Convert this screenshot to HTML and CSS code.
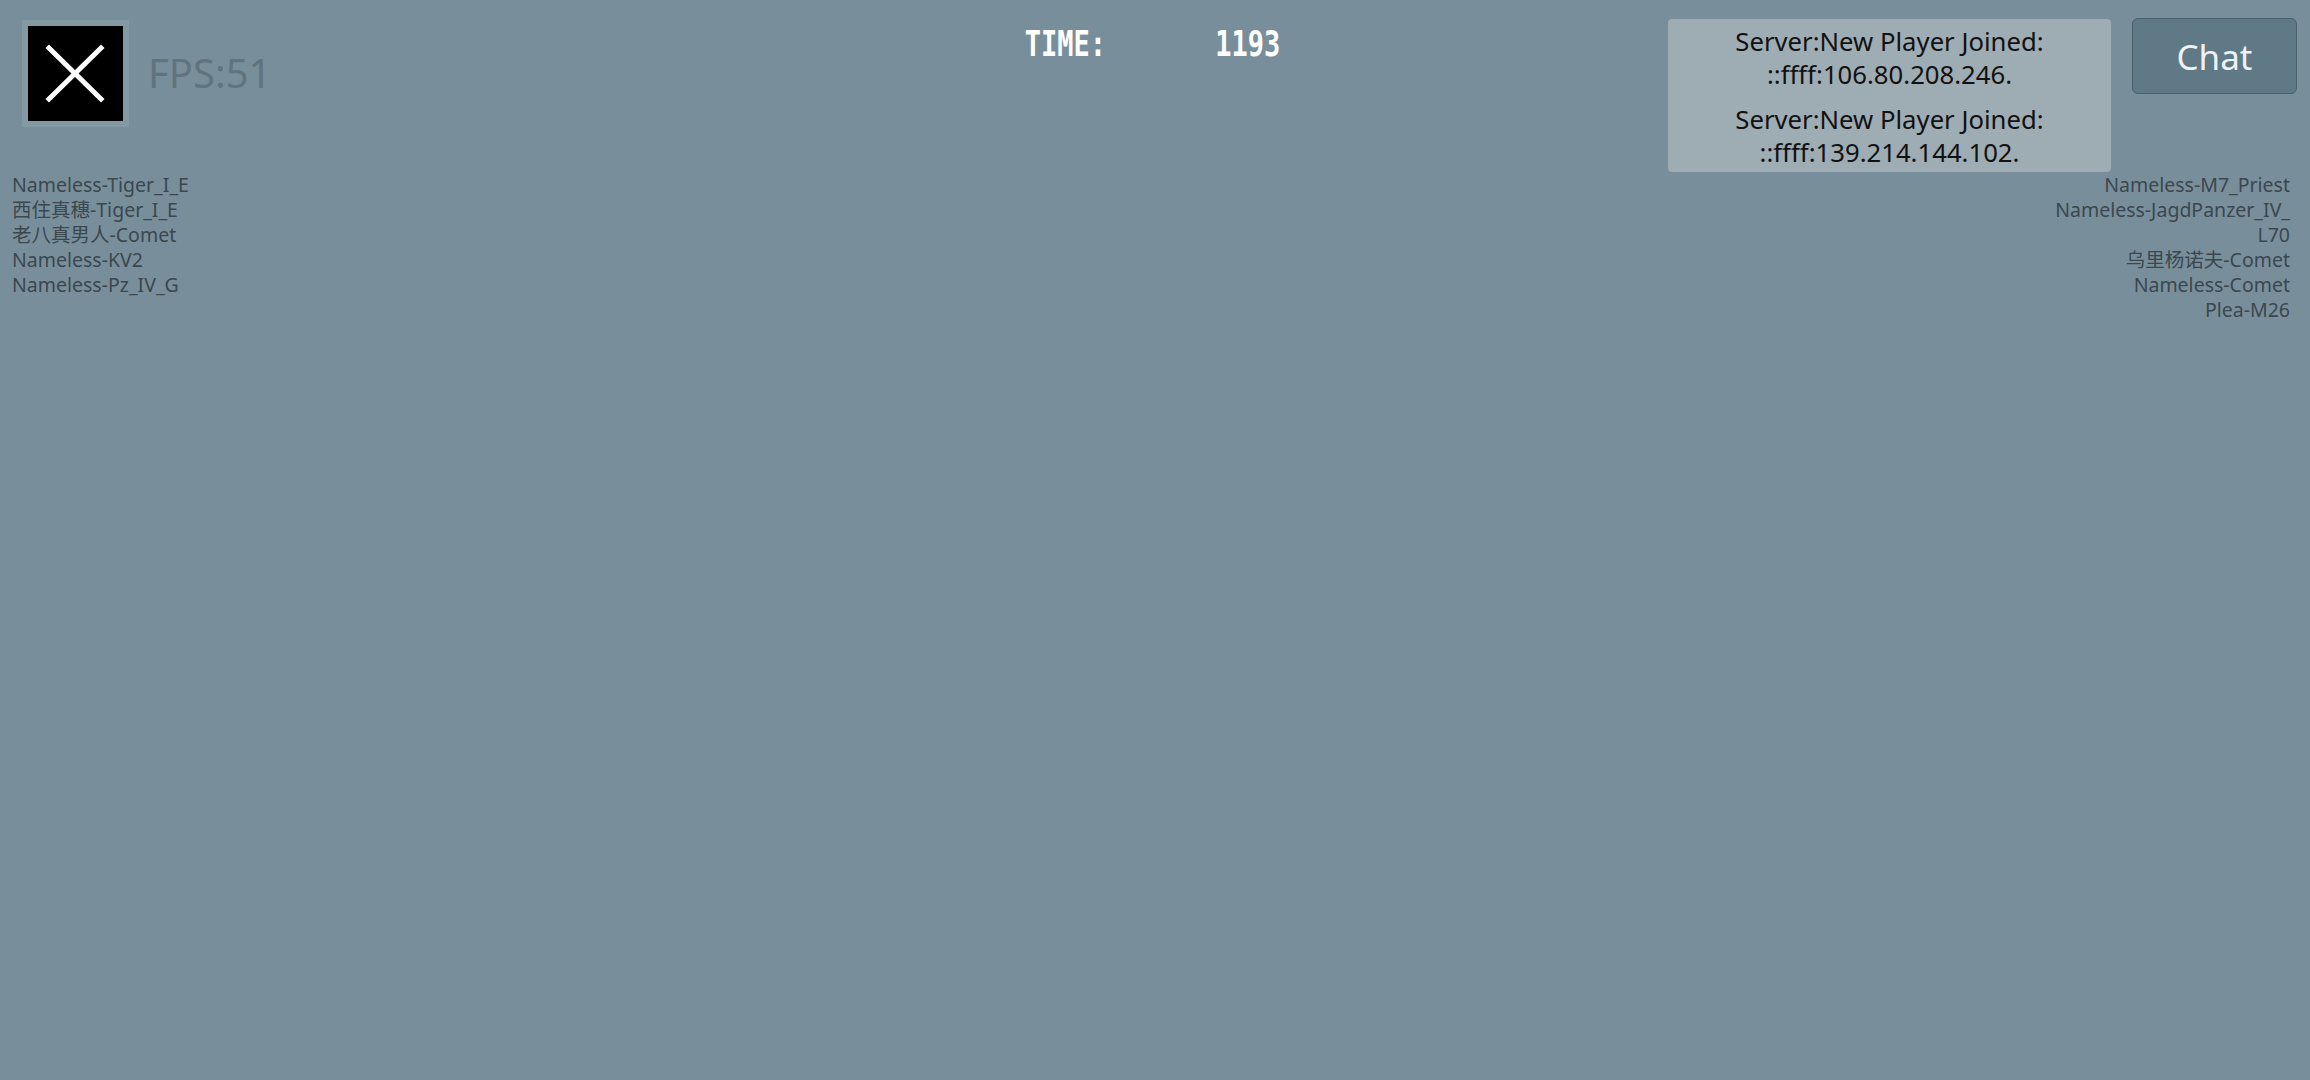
FILE: index.html
```html
<!DOCTYPE html>
<html lang="zh">
<head>
<meta charset="utf-8">
<title>HUD</title>
<link rel="stylesheet" href="styles.css">
</head>
<body>
<div class="hud">
  <header class="top">
    <div class="top-left">
      <button class="close-btn" aria-label="Close">
        <svg viewBox="0 0 95 95" width="95" height="95">
          <path d="M21 22 L73 73 M73 22 L21 73" stroke="#fff" stroke-width="5" stroke-linecap="square"/>
        </svg>
      </button>
      <span class="fps">FPS:51</span>
    </div>
    <div class="timer">
      <span class="timer-label">TIME:</span>
      <span class="timer-value">1193</span>
    </div>
    <div class="top-right">
      <div class="messages">
        <p class="msg">Server:New Player Joined:<br>::ffff:106.80.208.246.</p>
        <p class="msg">Server:New Player Joined:<br>::ffff:139.214.144.102.</p>
      </div>
      <button class="chat-btn">Chat</button>
    </div>
  </header>
  <div class="rosters">
    <ul class="team team-left">
      <li>Nameless-Tiger_I_E</li>
      <li>西住真穗-Tiger_I_E</li>
      <li>老八真男人-Comet</li>
      <li>Nameless-KV2</li>
      <li>Nameless-Pz_IV_G</li>
    </ul>
    <ul class="team team-right">
      <li>Nameless-M7_Priest</li>
      <li>Nameless-JagdPanzer_IV_<wbr>L70</li>
      <li>乌里杨诺夫-Comet</li>
      <li>Nameless-Comet</li>
      <li>Plea-M26</li>
    </ul>
  </div>
</div>
</body>
</html>
```

FILE: styles.css
```css
html, body {
  margin: 0;
  padding: 0;
  height: 100%;
}

body {
  background: #788f9b;
  font-family: "Noto Sans", "Noto Sans CJK SC", sans-serif;
  overflow: hidden;
}

.hud {
  width: 2310px;
  height: 1080px;
}

.top {
  display: grid;
  grid-template-columns: 1fr auto 1fr;
  align-items: start;
  padding-top: 18px;
}

.top-left {
  display: flex;
  align-items: center;
  gap: 19px;
  padding-left: 22px;
  margin-top: 2px;
}

.close-btn {
  width: 107px;
  height: 107px;
  padding: 0;
  margin: 0;
  border: 6px solid #8399a4;
  background: #000;
  display: flex;
  align-items: center;
  justify-content: center;
  cursor: pointer;
}

.close-btn svg {
  display: block;
}

.fps {
  font-size: 40px;
  color: #60737e;
  line-height: 1;
  margin-top: -2px;
}

.timer {
  display: flex;
  gap: 109px;
  margin-top: 8px;
  margin-left: -5px;
  font-family: "DejaVu Sans Mono", monospace;
  font-weight: bold;
  font-size: 27px;
  color: #fff;
  transform: scaleY(1.3);
  transform-origin: top;
  line-height: 1;
}

.top-right {
  display: flex;
  justify-content: flex-end;
  align-items: flex-start;
  gap: 21px;
  padding-right: 13px;
}

.messages {
  width: 443px;
  height: 153px;
  box-sizing: border-box;
  margin-top: 1px;
  padding-top: 6px;
  background: #9eacb4;
  border-radius: 4px;
  display: flex;
  flex-direction: column;
  gap: 12px;
  text-align: center;
}

.msg {
  margin: 0;
  font-size: 25.7px;
  line-height: 33px;
  color: #111;
}

.chat-btn {
  width: 165px;
  height: 76px;
  margin: 0;
  padding: 0;
  box-sizing: border-box;
  background: #5f7986;
  border: 1px solid #4b626e;
  border-radius: 6px;
  color: #eef2f4;
  font-family: "Noto Sans", sans-serif;
  font-size: 35px;
  line-height: 1;
  cursor: pointer;
}

.rosters {
  display: flex;
  justify-content: space-between;
  align-items: flex-start;
  padding: 0 20px 0 12px;
}

.team {
  list-style: none;
  margin: 0;
  padding: 0;
  font-size: 19.5px;
  line-height: 25px;
  color: #3b474e;
}

.team-right {
  width: 250px;
  text-align: right;
}
```
